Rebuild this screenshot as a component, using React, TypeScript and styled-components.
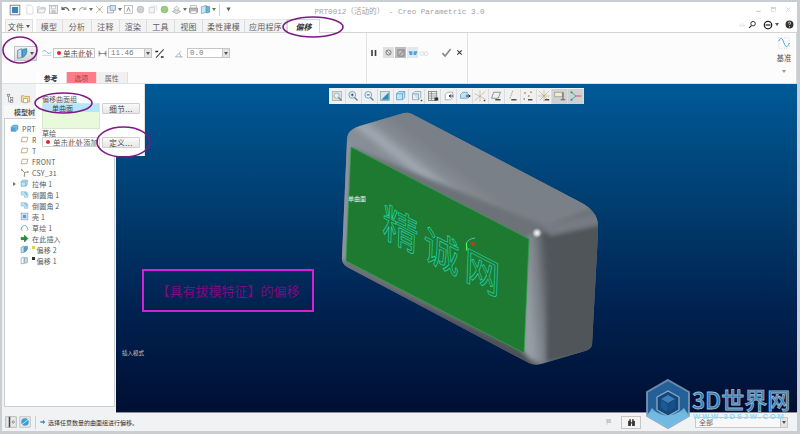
import React from "react";
import styled, { createGlobalStyle } from "styled-components";

const CJK = `"Noto Sans CJK SC", "Liberation Sans", sans-serif`;

const Global = createGlobalStyle`
  html, body { margin: 0; padding: 0; background: #c9ced2; }
  * { box-sizing: border-box; }
`;

const Page = styled.div`
  width: 800px; height: 434px; overflow: hidden; position: relative;
  padding: 2px 3px 3px 2px; display: flex; flex-direction: column;
  background: #c9ced2; font-family: ${CJK}; font-size: 8px; color: #444;
`;

/* ---------- title bar ---------- */
const TitleBar = styled.div`
  height: 15px; background: #fff; display: grid; grid-template-columns: 1fr auto 1fr; align-items: center;
`;
const Quick = styled.div`display: flex; align-items: center; padding-left: 7px; gap: 1px; opacity: .85;`;
const Title = styled.div`
  font-family: "Liberation Mono", ${CJK}; font-size: 7.6px; color: #a3a3a3; white-space: pre; padding-top: 1px;
`;
const WinBtns = styled.div`display: flex; justify-content: flex-end; gap: 8px; padding-right: 5px; align-items: center;`;
const QSep = styled.span`width: 1px; height: 12px; background: #c8c8c8; margin: 0 2px;`;
const Ic = styled.svg<{ $s?: number }>`
  width: ${p => p.$s ?? 11}px; height: ${p => p.$s ?? 11}px; flex: none; display: block;
`;

/* ---------- tabs ---------- */
const TabBar = styled.div`
  height: 16px; background: #fff; display: flex; align-items: flex-end; padding-left: 3px;
  border-bottom: 1px solid #d4d4d4; position: relative;
`;
const FileTab = styled.div`
  width: 28px; height: 13px; font-size: 8px; letter-spacing: .3px; color: #555; display: flex; align-items: center; justify-content: center; gap: 2px;
  background: #f5f5f5; border: 1px solid #e0e0e0; border-bottom: 0; margin-right: 3px;
`;
const Tab = styled.div<{ $w: number }>`
  width: ${p => p.$w}px; height: 13px; font-size: 8px; color: #5f5f5f; letter-spacing: .2px;
  display: flex; align-items: center; justify-content: center; white-space: nowrap;
  background: #f3f3f3; border-right: 1px solid #dcdcdc; border-top: 1px solid #e8e8e8;
`;
const ActiveTab = styled.div`
  width: 33px; height: 14px; margin-bottom: -1px; font-size: 8px; font-weight: 700; font-style: italic; color: #333;
  display: flex; align-items: center; justify-content: center;
  background: #fdfdfd; border: 1px solid #d4d4d4; border-bottom: 0;
`;
const HelpRow = styled.div`margin-left: auto; display: flex; align-items: center; gap: 2px; padding-right: 3px; align-self: center;`;

/* ---------- ribbon ---------- */
const Ribbon = styled.div`
  height: 51px; display: flex; background: #fcfcfc; border-bottom: 1px solid #e0e0e0;
  border-right: 1px solid #d8d8d8;
`;
const OptGroup = styled.div`
  width: 365px; display: flex; flex-direction: column; justify-content: space-between; padding-top: 13px;
  border-right: 1px solid #e2e2e2;
`;
const CtlRow = styled.div`display: flex; align-items: center; height: 14px; padding-left: 12px;`;
const SplitBtn = styled.div`
  width: 23px; height: 15px; display: flex; align-items: center; justify-content: space-between; padding: 0 2px 0 1px;
  background: linear-gradient(#f3f3f3, #d8d8d8); border: 1px solid #c4c4c4;
`;
const Arrow = styled.span`
  width: 0; height: 0; border-left: 2.5px solid transparent; border-right: 2.5px solid transparent; border-top: 3px solid #555; flex: none;
`;
const Gap = styled.span<{ $w: number }>`width: ${p => p.$w}px; flex: none;`;
const RefInput = styled.div`
  width: 42px; height: 10px; border: 1px solid #c6c6c6; background: #fff; display: flex; align-items: center; gap: 2px;
  padding-left: 3px; font-size: 7.500px; color: #444; white-space: nowrap; overflow: hidden;
`;
const Dot = styled.span`width: 4px; height: 4px; border-radius: 50%; background: #e8202c; flex: none;`;
const Combo = styled.div<{ $w: number }>`
  width: ${p => p.$w}px; height: 10px; border: 1px solid #c6c6c6; background: #fff; display: flex; align-items: center;
  font-family: "Liberation Mono", monospace; font-size: 7.500px; color: #777; padding-left: 2px; position: relative;
`;
const ComboBtn = styled.span`
  position: absolute; right: 0; top: 0; bottom: 0; width: 7px; background: #e4e4e4; border-left: 1px solid #c6c6c6;
  display: flex; align-items: center; justify-content: center;
`;
const PanelTabs = styled.div`display: flex; margin-left: 34px; height: 11px;`;
const PanelTab = styled.div<{ $bg: string; $bold?: boolean; $fg: string }>`
  width: 30.5px; height: 11px; background: ${p => p.$bg}; color: ${p => p.$fg}; font-size: 7px;
  font-weight: ${p => (p.$bold ? 700 : 400)}; display: flex; align-items: center; justify-content: center;
  border-right: 1px solid #e0e0e0;
`;
const PauseGroup = styled.div`
  width: 101px; border-right: 1px solid #e2e2e2; display: flex; align-items: center; height: 100%;
  padding: 0 0 11px 3px; gap: 1px;
`;
const StateBtn = styled.span<{ $bg: string }>`
  width: 11px; height: 11px; background: ${p => p.$bg}; display: flex; align-items: center; justify-content: center;
`;
const RibbonFill = styled.div`flex: 1;`;
const DatumGroup = styled.div`
  width: 22px; display: flex; flex-direction: column; align-items: center; padding-top: 3px; font-size: 7.500px; line-height: 12px; color: #555; gap: 2px; margin-right: 1px;
`;
const DatumArrow = styled(Arrow)`margin-top: 4px; opacity: .6;`;

/* ---------- main ---------- */
const Main = styled.div`flex: 1; display: flex; position: relative; min-height: 0;`;
const Sidebar = styled.div`
  width: 114px; padding: 7px 1px 6px 2px; display: flex; flex-direction: column; background: #f1f2f3;
`;
const SideTabs = styled.div`display: flex; height: 14px; align-items: center; gap: 4px; padding-left: 2px;`;
const SideHead = styled.div`height: 13px; font-size: 7px; font-weight: 700; color: #555; padding-left: 10px; display: flex; align-items: center; background: #f7f7f7;`;
const Tree = styled.div`
  flex: 1; background: #fff; border: 1px solid #cfcfcf; padding: 4px 0 0 0; display: flex; flex-direction: column;
`;
const Row = styled.div<{ $in?: number }>`
  height: 11px; display: flex; align-items: center; gap: 3px; padding-left: ${p => p.$in ?? 15}px;
  font-size: 7px; color: #5c5c5c; white-space: nowrap; letter-spacing: .2px;
`;
const Caret = styled.span`
  width: 0; height: 0; margin: 0 1px 0 -7px; border-top: 2.5px solid transparent; border-bottom: 2.5px solid transparent; border-left: 3px solid #777;
`;
const Mark = styled.span<{ $c: string }>`width: 2.5px; height: 2.5px; background: ${p => p.$c}; margin: -4px -1px 0 0;`;

const Canvas = styled.div`
  flex: 1; position: relative; overflow: hidden;
  background: linear-gradient(#005a97 0%, #003f72 34%, #00214f 70%, #000f33 100%);
  border-bottom: 1px solid #8d9196;
`;
const ModelSvg = styled.svg`position: absolute; left: 0; top: 0; width: 680px; height: 329px;`;
const ViewBar = styled.div`
  position: absolute; left: 213px; top: 4px; height: 16px; width: 255px; display: flex; align-items: center;
  background: #eef0f2; padding: 0 1px;
`;
const ViewBtn = styled.span<{ $on?: boolean }>`
  width: 15.9px; height: 15px; flex: none; display: flex; align-items: center; justify-content: center;
  border-right: 1px solid #dcdcdc; background: ${p => (p.$on ? "#cfd1d3" : "transparent")};
`;
const NoteBox = styled.div`
  position: absolute; left: 26px; top: 185px; width: 172px; height: 43px; border: 2px solid #d81fd8;
  display: flex; align-items: center; justify-content: center; color: #7c0a84; font-size: 13px; white-space: nowrap;
`;
const ModeLabel = styled.div`position: absolute; left: 6px; top: 265px; font-size: 5.500px; color: #c5cad0; white-space: nowrap;`;

/* ---------- floating panel ---------- */
const Panel = styled.div`
  position: absolute; left: 34px; top: 0; width: 109px; height: 72px; background: #fff; border-right: 1px solid #e0e0e0;
  padding: 11px 6px 0 6px; display: grid; grid-template-columns: 58px 38px; column-gap: 2px; align-content: start;
`;
const PanelLabel = styled.div`grid-column: 1 / span 2; height: 8px; font-size: 7px; color: #555; line-height: 8px; white-space: nowrap;`;
const ListBox = styled.div`height: 26px; background: #e9f9dc; border: 1px solid #d8e8d0;`;
const ListItem = styled.div`height: 8px; background: #b9e5fb; font-size: 7px; line-height: 8px; color: #345; padding-left: 9px;`;
const PanelBtn = styled.div`
  height: 11px; background: linear-gradient(#fafafa, #e6e6e6); border: 1px solid #cfcfcf; border-radius: 1px;
  display: flex; align-items: center; justify-content: center; font-size: 7.500px; color: #444; letter-spacing: .4px;
`;
const PanelInput = styled.div`
  height: 10px; border: 1px solid #d0d0d0; background: #fff; display: flex; align-items: center; gap: 3px; padding-left: 3px;
  font-size: 7.500px; color: #555; white-space: nowrap; overflow: hidden;
`;

/* ---------- status ---------- */
const Status = styled.div`
  height: 18px; background: #f1f2f3; display: flex; align-items: center; padding-left: 3px; gap: 2px; position: relative;
`;
const StatusSep = styled.span`width: 1px; height: 13px; background: #cfcfcf; margin: 0 2px;`;
const Prompt = styled.span`font-size: 6px; color: #333; white-space: nowrap;`;
const StatusRight = styled.div`margin-left: auto; display: flex; align-items: center; padding-right: 9px;`;
const FindBtn = styled.div`
  width: 20px; height: 13px; background: #f4f4f4; border: 1px solid #c6c6c6;
  display: flex; align-items: center; justify-content: center;
`;
const FilterBox = styled.div`
  width: 93px; height: 11px; border: 1px solid #c8c8c8; background: #f8f8f8; font-size: 7px; color: #666; padding-left: 3px;
  display: flex; align-items: center; position: relative;
`;

/* ---------- overlays ---------- */
const Marks = styled.svg`position: absolute; left: 0; top: 0; width: 800px; height: 434px; pointer-events: none;`;
const Logo = styled.div`position: absolute; left: 644px; top: 378px; width: 156px; height: 54px; display: flex; pointer-events: none;`;
const LogoText = styled.div`display: flex; flex-direction: column; align-items: flex-start; padding-top: 10px;`;
const LogoBig = styled.div`
  font-family: ${CJK}; font-size: 23px; line-height: 23px; height: 23px; font-weight: 500; color: #2a7cbc; white-space: nowrap; letter-spacing: 0;
  -webkit-text-stroke: .8px #9db6c9;
`;
const LogoSmall = styled.div`font-family: "Liberation Sans", sans-serif; font-size: 7.500px; line-height: 8px; font-weight: 700; color: #8ddcfb; letter-spacing: 1.900px; white-space: nowrap; margin-top: 2px; padding-left: 1px;`;

/* ---------- icons ---------- */
const blue = "#4aa5d8", pale = "#bfe3f5", mid = "#8a8a8a";
const cube = (
  <>
    <path d="M2 5l3-3h8v8l-3 3H2z" fill={pale} stroke="#5a9cc0" />
    <path d="M2 5h8v8M10 5l3-3" fill="none" stroke="#5a9cc0" />
  </>
);
const offsetIcon = (
  <>
    <path d="M2 4l5-2v11l-5 1z" fill={pale} stroke="#5a8aa8" />
    <path d="M8 3l5-1c1 4 0 8-5 11z" fill={blue} stroke="#3a7aa0" />
  </>
);
const ICONS: Record<string, React.ReactNode> = {
  active: <><rect x="1.5" y="1.5" width="13" height="13" fill="#e4f0f8" stroke="#555" /><rect x="4" y="4" width="8" height="8" fill="#1b6fb0" /></>,
  doc: <path d="M4 1.5h6l3 3v10H4z" fill="#fff" stroke="#c4c4c4" />,
  open: <path d="M2 13V4h4l1 1h6v2M2 13l2-6h10l-2 6z" fill="#f2f2f2" stroke="#aaa" />,
  save: <><rect x="2" y="2" width="12" height="12" fill="#eee" stroke="#999" /><rect x="5" y="3" width="6" height="4" fill="#fff" stroke="#aaa" /><rect x="5" y="9" width="6" height="5" fill="#bbb" /></>,
  undo: <path d="M3 4v4h4M3 8c3-4 8-4 10 2" fill="none" stroke="#444" strokeWidth="1.8" />,
  redo: <path d="M13 4v4H9M13 8c-3-4-8-4-10 2" fill="none" stroke="#a8a8a8" strokeWidth="1.6" />,
  regen: <><path d="M3 3l4 4M13 3L9 7M3 13l4-4M13 13L9 9" stroke="#c9a86a" strokeWidth="1.2" /><circle cx="8" cy="8" r="1.5" fill={mid} /></>,
  win: <><rect x="2" y="4" width="9" height="9" fill="#eee" stroke="#888" /><rect x="6" y="2" width="8" height="7" fill={pale} stroke="#5a8aa8" /></>,
  text: <><rect x="2" y="2" width="12" height="12" fill="#fff" stroke="#999" /><path d="M5.5 11L8 5l2.5 6" fill="none" stroke="#555" /></>,
  sphereG: <circle cx="8" cy="8" r="5" fill="#c6c9cc" stroke="#aaa" />,
  sheet: <><path d="M3 5h8v8H3z" fill="#f2f2f2" stroke="#bbb" /><path d="M6 3h8v7" fill="none" stroke="#ccc" /></>,
  sphere: <circle cx="8" cy="8" r="5" fill="#8cc468" stroke="#7aa860" />,
  stack: <><path d="M2 11l6-3 6 3-6 3z" fill="#ddd" stroke="#888" /><path d="M4 7l4-4 4 4-4 2z" fill="#eee" stroke="#999" /></>,
  print: <><rect x="4" y="2" width="8" height="4" fill="#fff" stroke="#999" /><rect x="2" y="6" width="12" height="6" fill="#aaa" stroke="#777" /><rect x="4" y="10" width="8" height="4" fill="#fff" stroke="#999" /></>,
  views: <><path d="M2 4l7-2v10l-7 2z" fill={pale} stroke="#5a8aa8" /><path d="M9 3l5 1v8l-5 1z" fill={blue} stroke="#3a7aa0" /></>,
  caretDown: <path d="M5 5h6l-3 6z" fill="#444" />,
  offset: offsetIcon,
  wave: <><path d="M1 6c3-4 5-1 7 1s4 3 7-1" fill="none" stroke="#3aa0d8" strokeWidth="1.2" /><path d="M1 12h14" stroke="#9ac" strokeDasharray="2 1" /></>,
  datum: <><path d="M2 2h12M2 14h12M2 2v12M14 2v12" fill="none" stroke="#c8c8c8" strokeDasharray="1 2" /><path d="M2 6c2-5 4-4 6 2s4 5 6 0" fill="none" stroke="#3aa0d8" strokeWidth="1.1" /></>,
  dim: <path d="M2 3v10M14 3v10M2 8h12M2 8l2-2M2 8l2 2M14 8l-2-2M14 8l-2 2" fill="none" stroke="#444" />,
  flip: <><path d="M3 14L14 2" stroke="#444" strokeWidth="1.5" /><path d="M2 5h4M10 13h4" stroke="#222" strokeWidth="2" /></>,
  angle: <path d="M1 14h13M1 14L11 4M7 8c2 1 3 3 3 6" fill="none" stroke="#7a93a8" strokeWidth="1.2" />,
  pause: <path d="M4 2v12M11 2v12" stroke="#444" strokeWidth="3.4" />,
  stop: <><circle cx="8" cy="8" r="4.5" fill="none" stroke="#666" strokeWidth="1.4" /><path d="M5 5l6 6" stroke="#666" /></>,
  preview: <><path d="M3 3h10v10H3z" fill="none" stroke="#666" /><path d="M5 12L12 4" stroke="#666" /></>,
  glasses: <><path d="M1 5h6v6H3zM9 5h6l-2 6H9z" fill={blue} /></>,
  goggles: <><circle cx="5" cy="9" r="3" fill="none" stroke="#ccc" /><circle cx="11" cy="9" r="3" fill="none" stroke="#ccc" /></>,
  check: <path d="M2 9l4 4 8-10" fill="none" stroke="#8a8a8a" strokeWidth="2.4" />,
  cross: <path d="M3 3l10 10M13 3L3 13" stroke="#333" strokeWidth="2.4" />,
  search: <><circle cx="9" cy="6.5" r="4" fill="none" stroke="#222" strokeWidth="1.6" /><path d="M6 10l-4 4" stroke="#222" strokeWidth="2" /></>,
  minusC: <><circle cx="8" cy="8" r="6" fill="none" stroke="#222" strokeWidth="2" /><path d="M4 8h8" stroke="#222" strokeWidth="2" /></>,
  help: <><circle cx="8" cy="8" r="7" fill="#333" /><path d="M6 6c0-3 4-3 4-.5 0 1.500-2 1.500-2 3.500M8 11v2" fill="none" stroke="#fff" strokeWidth="1.4" /></>,
  tri: <path d="M8 5l5 5H3z" fill="none" stroke="#c8c8c8" />,
  min: <path d="M3 12h10" stroke="#bbb" strokeWidth="2" />,
  max: <><rect x="3" y="3" width="10" height="10" fill="none" stroke="#bbb" /><path d="M3 5h10" stroke="#bbb" strokeWidth="2" /></>,
  close: <><path d="M3 3l10 10M13 3L3 13" stroke="#c8c8c8" strokeWidth="1.5" /></>,
  model: <><path d="M2 5l4-3h8v7l-3 4H2z" fill={blue} stroke="#4a8ab0" /><path d="M2 5h9v8M11 5l3-3" fill="none" stroke="#cde" /></>,
  plane: <path d="M4 4h10l-2 8H2z" fill="none" stroke="#a08a50" strokeWidth="1.200" />,
  csys: <><path d="M8 8L3 3M8 8l6-1M8 8v6" stroke="#666" strokeWidth="1.2" /><circle cx="3" cy="3" r="1.500" fill="#b59a50" /><circle cx="14" cy="7" r="1.500" fill="#b59a50" /><circle cx="8" cy="14" r="1.500" fill="#b59a50" /></>,
  extrude: cube,
  round: <><path d="M2 3h8c3 0 4 2 4 5v5H8V9H2z" fill={pale} stroke="#8fb6cc" /><path d="M8 5c3 0 4 1 4 4" fill="none" stroke={blue} strokeWidth="1.500" /></>,
  shell: <><rect x="2" y="2" width="12" height="12" fill="#dbe9f2" stroke="#88a" /><rect x="5" y="5" width="6" height="6" fill="#5aa0d0" /></>,
  sketch: <><path d="M2 12c1-10 11-10 12 0" fill="none" stroke="#2f8fc0" strokeWidth="1.300" /><path d="M2 13h3M11 13h3" stroke="#c9a040" /></>,
  insert: <path d="M2 6h6V2l6 6-6 6v-4H2z" fill="#1f9a1f" stroke="#063" />,
  offset2: <><path d="M2 4l5-2v11l-5 1z" fill="#fff" stroke="#6a8aa0" /><path d="M8 3h5v9l-5 1z" fill={pale} stroke="#6a8aa0" /></>,
  zfit: <><rect x="2" y="2" width="12" height="12" fill="#dcdfe2" stroke="#aaa" /><circle cx="7.500" cy="7.500" r="3.500" fill="#dff0fa" stroke="#8aa" /><path d="M10 10l4 4" stroke="#777" strokeWidth="1.500" /></>,
  zin: <><circle cx="7" cy="6.500" r="4.500" fill="#e6f4fc" stroke="#5a8aa8" /><path d="M5 6.500h4M7 4.500v4" stroke="#225" /><path d="M10 10l4 4" stroke="#777" strokeWidth="1.700" /></>,
  zout: <><circle cx="7" cy="6.500" r="4.500" fill="#e6f4fc" stroke="#5a8aa8" /><path d="M5 6.500h4" stroke="#225" /><path d="M10 10l4 4" stroke="#777" strokeWidth="1.700" /></>,
  shade: <><rect x="2" y="2" width="12" height="12" fill="#dfe6ea" stroke="#8aa" /><path d="M3 13L13 3v10z" fill="#2f8db8" /></>,
  cubeV: cube,
  cubeW: <><path d="M2 5l3-3h8v8l-3 3H2z" fill="#e8eef2" stroke="#89a" /><path d="M2 5h8v8" fill={pale} stroke="#89a" /><path d="M13 13h2v2h-2z" fill="#444" /></>,
  table: <><rect x="2" y="2" width="11" height="12" fill="#eee" stroke="#777" /><path d="M2 5h11M2 8h11M2 11h11M6 2v12" stroke="#888" /><rect x="10" y="10" width="5" height="4" fill="#333" /></>,
  cubeA: <><path d="M3 6l3-3h7v7l-3 3H3z" fill="#fff" stroke="#99a" /><path d="M14 8H8M8 8l3-2M8 8l3 2" stroke="#234" strokeWidth="1.200" /></>,
  cubeB: <><path d="M2 6l3-3h6v8H2z" fill={pale} stroke="#5a9cc0" /><path d="M9 8h6M15 8l-3-2M15 8l-3 2" stroke="#234" strokeWidth="1.200" /></>,
  dplane: <><path d="M8 1v14M1 14L15 2M1 5l14 7" stroke="#b0925a" strokeDasharray="1.500 1" /><path d="M13 13h2v2h-2z" fill="#444" /></>,
  dframe: <><path d="M5 3h9l-3 8H2z" fill="none" stroke="#777" /><path d="M7 13h7" stroke="#555" strokeWidth="2" /></>,
  daxis: <><path d="M9 1L5 12" stroke="#a88a4a" strokeDasharray="2 1" /><path d="M7 13h7" stroke="#555" strokeWidth="2" /></>,
  dpts: <><path d="M3 3h2v2H3zM11 2h2v2h-2zM8 7h2v2H8zM2 11h2v2H2z" fill="#a88a4a" /><path d="M8 13h6" stroke="#555" strokeWidth="2" /></>,
  dcsys: <><path d="M8 1v14M1 8h14M2 2l12 12M14 2L2 14" stroke="#a88a4a" strokeDasharray="1.500 1" /><path d="M9 13h6" stroke="#555" strokeWidth="2" /></>,
  note: <><rect x="1" y="3" width="10" height="6" fill="#f3edc4" stroke="#999" /><path d="M12 3v9M9 13h6" stroke="#555" strokeWidth="1.300" /></>,
  spin: <><path d="M2 3l6 5-6 5" fill="none" stroke="#4a9" strokeWidth="1.300" /><path d="M8 8h7" stroke="#d66" strokeWidth="1.600" /><circle cx="2" cy="3" r="1.500" fill="#3a3" /><circle cx="2" cy="13" r="1.500" fill="#39c" /></>,
  pane: <><rect x="1" y="1" width="14" height="14" fill="#e8e8e8" stroke="#aaa" /><path d="M6 1v14" stroke="#444" strokeWidth="2" /><circle cx="11" cy="8" r="1.500" fill="none" stroke="#777" /></>,
  globe: <><rect x="1" y="1" width="14" height="14" fill="#e6e6e6" stroke="#bbb" /><circle cx="8" cy="8" r="5" fill="#3a9ed8" /><path d="M3 12L13 4" stroke="#fff" /></>,
  promptArrow: <path d="M1 6h7V2l6 6-6 6v-4H1z" fill="#2f8fd0" />,
  flag: <path d="M4 2v12M4 3h8l-2 3 2 3H4z" fill="#ccc" stroke="#b5b5b5" />,
  binoc: <><rect x="2" y="5" width="5" height="9" rx="1" fill="#333" /><rect x="9" y="5" width="5" height="9" rx="1" fill="#333" /><rect x="4" y="2" width="3" height="4" fill="#555" /><rect x="9" y="2" width="3" height="4" fill="#555" /><rect x="7" y="7" width="2" height="3" fill="#666" /></>,
  tree: <><rect x="2" y="2" width="4" height="3" fill="none" stroke="#777" /><rect x="7" y="7" width="4" height="3" fill="none" stroke="#777" /><rect x="7" y="12" width="4" height="3" fill="none" stroke="#777" /><path d="M4 5v9h3" fill="none" stroke="#777" /></>,
  folder: <><path d="M2 13V4h4l1 1h7v8z" fill="#f3dd9e" stroke="#b59a50" /><path d="M5 8h6v6H5z" fill="#fff" stroke="#b59a50" /></>,
};
const I = ({ k, s }: { k: string; s?: number }) => <Ic $s={s} viewBox="0 0 16 16">{ICONS[k]}</Ic>;

const quick = ["active", "", "doc", "open", "save", "undo", "v", "redo", "v", "regen", "win", "v", "text", "sphereG", "sheet", "sphere", "stack", "v", "print", "views", "v", "|", "caretDown"];
const tabs: [string, number][] = [["模型", 27], ["分析", 29], ["注释", 28], ["渲染", 27], ["工具", 28], ["视图", 28], ["柔性建模", 42], ["应用程序", 42]];
const treeRows: { k: string; t: string; mark?: string; caret?: boolean }[] = [
  { k: "plane", t: "RIGHT" }, { k: "plane", t: "TOP" }, { k: "plane", t: "FRONT" }, { k: "csys", t: "CSY_31" },
  { k: "extrude", t: "拉伸 1", caret: true }, { k: "round", t: "倒圆角 1" }, { k: "round", t: "倒圆角 2" }, { k: "shell", t: "壳 1" },
  { k: "sketch", t: "草绘 1" }, { k: "insert", t: "在此插入" }, { k: "offset", t: "偏移 2", mark: "#e6d23a" }, { k: "offset2", t: "偏移 1", mark: "#333" },
];
const view: [string, boolean?][] = [["zfit"], ["zin"], ["zout"], ["shade"], ["cubeV"], ["cubeW"], ["table"], ["cubeA"], ["cubeB"], ["dplane"], ["dframe"], ["daxis"], ["dpts"], ["dcsys"], ["note", true], ["spin", true]];

const SIL = "M347 140 C347 132 352 128 363 125 L404 113 Q408 112 412 114 L580 202 Q598 211 598 226 L598 233 L592 345 Q591 349 585 351 L541 364 Q535 366 529 363 L347 267 Q341 263 342 257 Z";

const Model = () => (
  <ModelSvg viewBox="116 84 680 329">
    <defs>
      <linearGradient id="top" gradientUnits="userSpaceOnUse" x1="463" y1="172" x2="442" y2="199">
        <stop offset="0" stopColor="#7a8088" /><stop offset="0.45" stopColor="#858c94" /><stop offset="0.75" stopColor="#a1aab4" /><stop offset="1" stopColor="#878e96" />
      </linearGradient>
      <linearGradient id="side" gradientUnits="userSpaceOnUse" x1="527" y1="295" x2="550" y2="293">
        <stop offset="0" stopColor="#969ea7" /><stop offset="0.55" stopColor="#787e85" /><stop offset="1" stopColor="#50555a" />
      </linearGradient>
      <linearGradient id="under" gradientUnits="userSpaceOnUse" x1="440" y1="305" x2="436" y2="314">
        <stop offset="0" stopColor="#7b8188" /><stop offset="1" stopColor="#4c5157" />
      </linearGradient>
      <clipPath id="sil"><path d={SIL} /></clipPath>
      <filter id="soft" x="-5%" y="-5%" width="110%" height="110%"><feGaussianBlur stdDeviation="2" /></filter>
      <radialGradient id="spec"><stop offset="0" stopColor="#fff" /><stop offset=".4" stopColor="#fff" stopOpacity=".7" /><stop offset="1" stopColor="#fff" stopOpacity="0" /></radialGradient>
    </defs>
    <path d={SIL} fill="#6d7279" />
    <g clipPath="url(#sil)">
      <g filter="url(#soft)">
        <path d="M340 120 L408 105 L600 205 L545 226 L351 147 Z" fill="url(#top)" />
        <path d="M545 226 L604 212 L604 240 L548 240 Z" fill="#767c83" />
        <path d="M528 235 L549 232 L546 365 L522 355 Z" fill="url(#side)" />
        <path d="M549 236 L604 224 L597 352 L546 362 Z" fill="#4f5459" />
        <path d="M340 262 L524 352 L540 372 L525 368 L340 272 Z" fill="url(#under)" />
        <path d="M352 145 L347 262 L338 258 L343 134 Z" fill="#8d949c" />
      </g>
    </g>
    <path d="M351 147 L529 239 L524 353 L346 261 Z" fill="#1f7a31" stroke="#2aa648" strokeWidth=".7" />
    <g fill="none" stroke="#1fd6b2" strokeWidth=".7" fontFamily={CJK} fontSize="40">
      <text transform="matrix(.89 .46 -.04 1 382 235)">精</text>
      <text transform="matrix(.89 .46 -.04 1 423 257)">诚</text>
      <text transform="matrix(.89 .46 -.04 1 464 278)">网</text>
    </g>
    <text x="348" y="201" fontSize="6" fill="#e8f2e8" fontFamily={CJK}>单曲面</text>
    <path d="M467 251 L466.500 243 Q468 239 475 238" fill="none" stroke="#43e0c8" strokeWidth=".8" />
    <path d="M466.500 250 V243" stroke="#4cf04c" strokeWidth="1.200" />
    <path d="M470 243 Q473 241 476 244" fill="none" stroke="#c33" strokeWidth=".8" />
    <circle cx="473" cy="244" r="1.500" fill="#f02020" />
    <circle cx="537" cy="233" r="5" fill="url(#spec)" />
  </ModelSvg>
);

export default function App() {
  return (
    <Page>
      <Global />
      <TitleBar>
        <Quick>
          {quick.map((k, i) =>
            k === "" ? <Gap key={i} $w={1} /> : k === "v" ? <Arrow key={i} /> : k === "|" ? <QSep key={i} /> : <I key={i} k={k} s={k === "active" ? 12 : 11} />
          )}
        </Quick>
        <Title>PRT0012（活动的） - Creo Parametric 3.0</Title>
        <WinBtns><I k="min" s={7} /><I k="max" s={7} /><I k="close" s={7} /></WinBtns>
      </TitleBar>

      <TabBar>
        <FileTab>文件<Arrow /></FileTab>
        {tabs.map(([t, w]) => <Tab key={t} $w={w}>{t}</Tab>)}
        <ActiveTab>偏移</ActiveTab>
        <HelpRow>
          <I k="tri" s={8} /><I k="search" s={9} /><Gap $w={2} /><I k="minusC" s={10} /><Arrow /><Gap $w={2} /><I k="help" s={9} />
        </HelpRow>
      </TabBar>

      <Ribbon>
        <OptGroup>
          <CtlRow>
            <SplitBtn><I k="offset" s={13} /><Arrow /></SplitBtn>
            <Gap $w={5} /><I k="wave" s={10} /><Gap $w={1} />
            <RefInput><Dot />单击此处</RefInput>
            <Gap $w={3} /><I k="dim" s={9} /><Gap $w={1} />
            <Combo $w={44}>11.46<ComboBtn><Arrow /></ComboBtn></Combo>
            <Gap $w={2} /><I k="flip" s={11} /><Gap $w={10} /><I k="angle" s={9} /><Gap $w={3} />
            <Combo $w={43}>0.0<ComboBtn><Arrow /></ComboBtn></Combo>
          </CtlRow>
          <PanelTabs>
            <PanelTab $bg="#fff" $fg="#333" $bold>参考</PanelTab>
            <PanelTab $bg="#ff7b87" $fg="#9a4a55">选项</PanelTab>
            <PanelTab $bg="#f0f0f0" $fg="#666">属性</PanelTab>
          </PanelTabs>
        </OptGroup>
        <PauseGroup>
          <I k="pause" s={8} />
          <Gap $w={3} />
          <StateBtn $bg="#e0e0e0"><I k="stop" s={9} /></StateBtn>
          <StateBtn $bg="#bdbdbd"><I k="preview" s={10} /></StateBtn>
          <StateBtn $bg="#dfe8f0"><I k="glasses" s={10} /></StateBtn>
          <I k="goggles" s={10} />
          <Gap $w={10} />
          <I k="check" s={11} />
          <Gap $w={2} />
          <I k="cross" s={7} />
        </PauseGroup>
        <RibbonFill />
        <DatumGroup>
          <I k="datum" s={14} />
          基准
          <DatumArrow />
        </DatumGroup>
      </Ribbon>

      <Main>
        <Sidebar>
          <SideTabs><I k="tree" s={10} /><I k="folder" s={11} /></SideTabs>
          <SideHead>模型树</SideHead>
          <Tree>
            <Row $in={5}><I k="model" s={9} />PRT0012.PRT</Row>
            {treeRows.map(r => (
              <Row key={r.t}>
                {r.caret && <Caret />}
                <I k={r.k} s={9} />
                {r.mark && <Mark $c={r.mark} />}
                {r.t}
              </Row>
            ))}
          </Tree>
        </Sidebar>
        <Canvas>
          <Model />
          <ViewBar>
            {view.map(([k, on]) => <ViewBtn key={k} $on={on}><I k={k} s={12} /></ViewBtn>)}
          </ViewBar>
          <NoteBox>【具有拔模特征】的偏移</NoteBox>
          <ModeLabel>插入模式</ModeLabel>
        </Canvas>
        <Panel>
          <PanelLabel>偏移曲面组</PanelLabel>
          <ListBox><ListItem>单曲面</ListItem></ListBox>
          <PanelBtn>细节...</PanelBtn>
          <PanelLabel>草绘</PanelLabel>
          <PanelInput><Dot />单击此处添加</PanelInput>
          <PanelBtn>定义...</PanelBtn>
        </Panel>
      </Main>

      <Status>
        <I k="pane" s={12} /><I k="globe" s={12} /><StatusSep />
        <I k="promptArrow" s={6} />
        <Prompt>选择任意数量的曲面组进行偏移。</Prompt>
        <StatusRight>
          <I k="flag" s={8} /><Gap $w={8} />
          <FindBtn><I k="binoc" s={9} /></FindBtn><Gap $w={54} />
          <FilterBox>全部<ComboBtn><Arrow /></ComboBtn></FilterBox>
        </StatusRight>
      </Status>

      <Marks viewBox="0 0 800 434">
        <g fill="none" stroke="#7c1a86" strokeWidth="1.600">
          <ellipse cx="313" cy="27" rx="30" ry="10" />
          <ellipse cx="20" cy="50" rx="17" ry="13" />
          <ellipse cx="63.500" cy="103" rx="28.500" ry="10" />
          <ellipse cx="123.500" cy="142" rx="26.500" ry="15" />
        </g>
      </Marks>

      <Logo>
        <svg width="48" height="52" viewBox="0 0 48 52">
          <path d="M24 2 L45 14 V38 L24 50 L3 38 V14 Z" fill="#2a6fa8" fillOpacity=".85" stroke="#7f9fbc" strokeOpacity=".8" strokeWidth="2" />
          <path d="M3 38 L24 50 L45 38 L40 30 C30 40 16 40 8 30 Z" fill="#7cc8ee" fillOpacity=".8" />
          <path d="M24 13 L35 19 V32 L24 38 L13 32 V19 Z" fill="#12487c" stroke="#8fb0c8" strokeWidth="1.200" />
          <path d="M24 17 L31 21 L24 25 L17 21 Z" fill="#3c7fb8" />
          <path d="M17 22 L23.500 26 V34 L17 30 Z" fill="#1c5a94" />
          <path d="M31 22 L24.500 26 V34 L31 30 Z" fill="#16508a" />
        </svg>
        <LogoText>
          <LogoBig>3D世界网</LogoBig>
          <LogoSmall>WWW.3DSJW.COM</LogoSmall>
        </LogoText>
      </Logo>
    </Page>
  );
}
